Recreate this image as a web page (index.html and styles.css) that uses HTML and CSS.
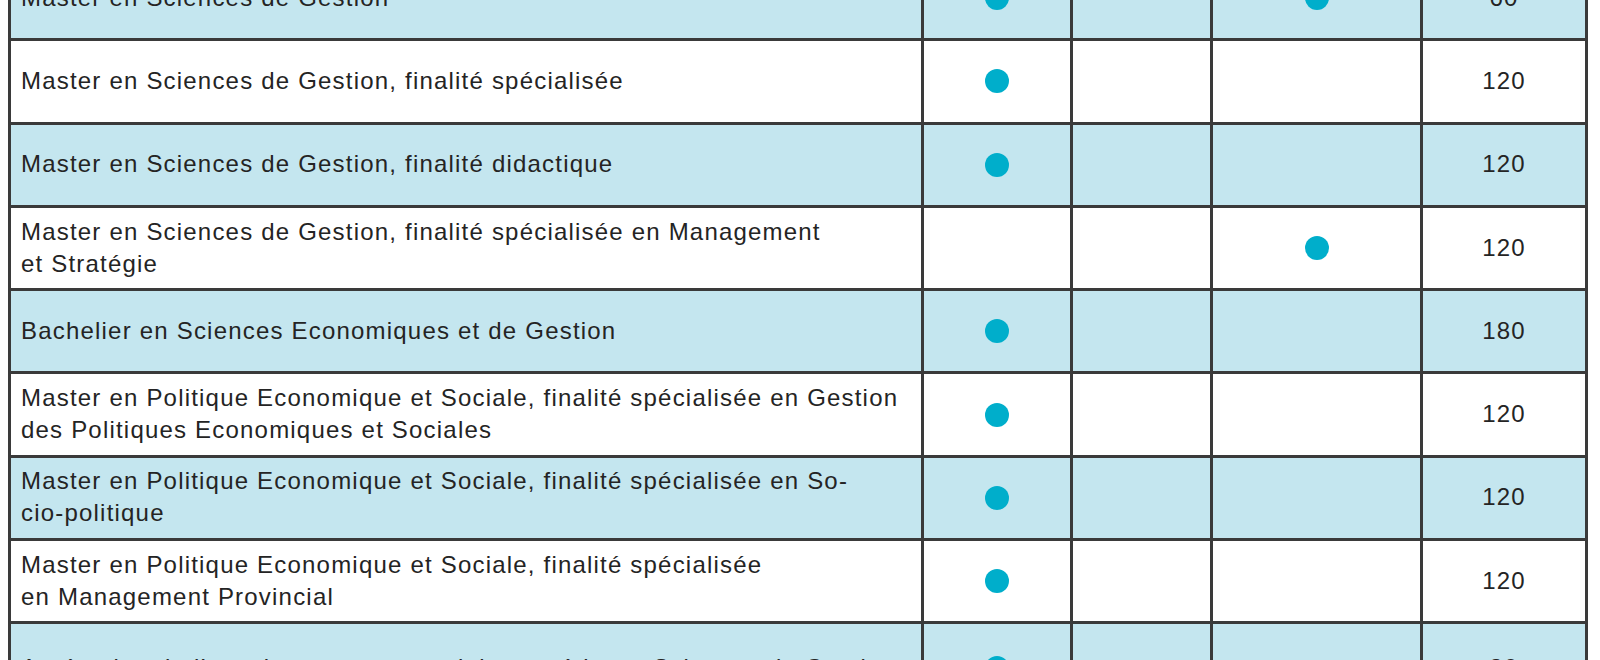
FILE: index.html
```html
<!DOCTYPE html>
<html lang="fr">
<head>
<meta charset="utf-8">
<title>Programmes</title>
<link rel="stylesheet" href="styles.css">
</head>
<body>
<div class="table" role="table">
  <div class="row alt" role="row">
    <div class="cell label">Master en Sciences de Gestion</div>
    <div class="cell mark"><span class="dot"></span></div>
    <div class="cell mark"></div>
    <div class="cell mark"><span class="dot"></span></div>
    <div class="cell num">60</div>
  </div>
  <div class="row" role="row">
    <div class="cell label">Master en Sciences de Gestion, finalité spécialisée</div>
    <div class="cell mark"><span class="dot"></span></div>
    <div class="cell mark"></div>
    <div class="cell mark"></div>
    <div class="cell num">120</div>
  </div>
  <div class="row alt" role="row">
    <div class="cell label">Master en Sciences de Gestion, finalité didactique</div>
    <div class="cell mark"><span class="dot"></span></div>
    <div class="cell mark"></div>
    <div class="cell mark"></div>
    <div class="cell num">120</div>
  </div>
  <div class="row" role="row">
    <div class="cell label">Master en Sciences de Gestion, finalité spécialisée en Management<br>et Stratégie</div>
    <div class="cell mark"></div>
    <div class="cell mark"></div>
    <div class="cell mark"><span class="dot"></span></div>
    <div class="cell num">120</div>
  </div>
  <div class="row alt" role="row">
    <div class="cell label">Bachelier en Sciences Economiques et de Gestion</div>
    <div class="cell mark"><span class="dot"></span></div>
    <div class="cell mark"></div>
    <div class="cell mark"></div>
    <div class="cell num">180</div>
  </div>
  <div class="row" role="row">
    <div class="cell label">Master en Politique Economique et Sociale, finalité spécialisée en Gestion<br>des Politiques Economiques et Sociales</div>
    <div class="cell mark"><span class="dot"></span></div>
    <div class="cell mark"></div>
    <div class="cell mark"></div>
    <div class="cell num">120</div>
  </div>
  <div class="row alt" role="row">
    <div class="cell label">Master en Politique Economique et Sociale, finalité spécialisée en So-<br>cio-politique</div>
    <div class="cell mark"><span class="dot"></span></div>
    <div class="cell mark"></div>
    <div class="cell mark"></div>
    <div class="cell num">120</div>
  </div>
  <div class="row" role="row">
    <div class="cell label">Master en Politique Economique et Sociale, finalité spécialisée<br>en Management Provincial</div>
    <div class="cell mark"><span class="dot"></span></div>
    <div class="cell mark"></div>
    <div class="cell mark"></div>
    <div class="cell num">120</div>
  </div>
  <div class="row alt tall" role="row">
    <div class="cell label">Agrégation de l’enseignement secondaire supérieur - Sciences de Gestion</div>
    <div class="cell mark"><span class="dot"></span></div>
    <div class="cell mark"></div>
    <div class="cell mark"></div>
    <div class="cell num">30</div>
  </div>
</div>
</body>
</html>
```
FILE: styles.css
```css
html, body {
  margin: 0;
  padding: 0;
  background: #ffffff;
}

body {
  font-family: "Liberation Sans", Arial, sans-serif;
  color: #242424;
  overflow: hidden;
}

.table {
  margin: -42px 0 0 8px;
  width: 1580px;
  box-sizing: border-box;
  border-left: 3px solid #3a3a3a;
}

.row {
  display: grid;
  grid-template-columns: 913px 149px 140px 210px 165px;
  height: 83.3px;
  box-sizing: border-box;
  border-bottom: 3px solid #3a3a3a;
  background: #ffffff;
}

.row.alt {
  background: #c4e6ef;
}

.row.tall {
  height: 91px;
}

.cell {
  box-sizing: border-box;
  border-right: 3px solid #3a3a3a;
  display: flex;
  align-items: center;
  font-size: 24px;
  line-height: 32px;
  letter-spacing: 1.2px;
}

.label {
  padding: 0 0 1px 10px;
}

.mark,
.num {
  justify-content: center;
}

.num {
  padding-bottom: 1px;
}

.dot {
  width: 24px;
  height: 24px;
  border-radius: 50%;
  background: #00aecb;
}
```
